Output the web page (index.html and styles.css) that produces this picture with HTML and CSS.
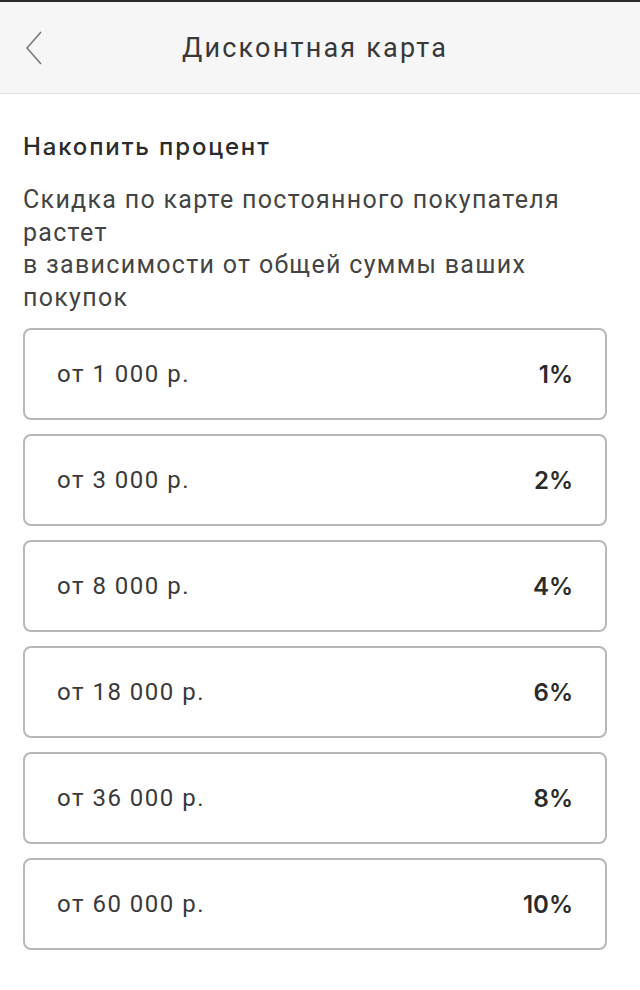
FILE: index.html
```html
<!DOCTYPE html>
<html lang="ru">
<head>
<meta charset="utf-8">
<title>Дисконтная карта</title>
<link rel="stylesheet" href="styles.css">
</head>
<body>
<header class="topbar">
  <button class="back" aria-label="Назад">
    <svg width="20" height="36" viewBox="0 0 20 36"><path d="M17 2 L3 18 L17 34" fill="none" stroke="#7a7a7a" stroke-width="1.6"/></svg>
  </button>
  <h1 class="title">Дисконтная карта</h1>
</header>
<main class="content">
  <h2 class="heading">Накопить процент</h2>
  <p class="lead">Скидка по карте постоянного покупателя растет<br>в зависимости от общей суммы ваших покупок</p>
  <ul class="tiers">
    <li class="tier"><span class="sum">от 1 000 р.</span><span class="pct">1%</span></li>
    <li class="tier"><span class="sum">от 3 000 р.</span><span class="pct">2%</span></li>
    <li class="tier"><span class="sum">от 8 000 р.</span><span class="pct">4%</span></li>
    <li class="tier"><span class="sum">от 18 000 р.</span><span class="pct">6%</span></li>
    <li class="tier"><span class="sum">от 36 000 р.</span><span class="pct">8%</span></li>
    <li class="tier"><span class="sum">от 60 000 р.</span><span class="pct">10%</span></li>
  </ul>
</main>
</body>
</html>
```

FILE: styles.css
```css
* { box-sizing: border-box; }

html, body {
  margin: 0;
  padding: 0;
  background: #fff;
  font-family: Roboto, "Noto Sans", sans-serif;
  color: #333;
}

.topbar {
  position: relative;
  height: 94px;
  background: #f6f6f6;
  border-top: 2px solid #2a2a2a;
  border-bottom: 1px solid #e4e4e4;
  display: flex;
  align-items: center;
  justify-content: center;
}

.back {
  position: absolute;
  left: 24px;
  top: 28px;
  padding: 0;
  border: 0;
  background: none;
  display: block;
}

.back svg { display: block; }

.title {
  margin: 0 10px 0 0;
  font-weight: 400;
  font-size: 27px;
  letter-spacing: 2.2px;
  color: #383838;
}

.content {
  padding: 0 23px;
}

.heading {
  margin: 0;
  padding-top: 38px;
  font-family: Inter, Roboto, sans-serif;
  font-weight: 500;
  font-size: 24px;
  letter-spacing: 1.85px;
  line-height: 30px;
  color: #2b2b2b;
}

.lead {
  margin: 22px 0 0;
  font-size: 25px;
  letter-spacing: 1.3px;
  line-height: 32.5px;
  color: #444;
  max-width: 584px;
}

.tiers {
  list-style: none;
  margin: 14px 0 0;
  padding: 0;
  display: flex;
  flex-direction: column;
  gap: 14px;
  width: 584px;
}

.tier {
  height: 92px;
  border: 2px solid #b8b8b8;
  border-radius: 8px;
  display: flex;
  align-items: center;
  justify-content: space-between;
  padding: 0 32px 0 32px;
}

.sum {
  font-size: 24px;
  letter-spacing: 1.5px;
  color: #3a3a3a;
}

.pct {
  font-family: Inter, Roboto, sans-serif;
  font-weight: 600;
  font-size: 24px;
  color: #2b2b2b;
}
```
